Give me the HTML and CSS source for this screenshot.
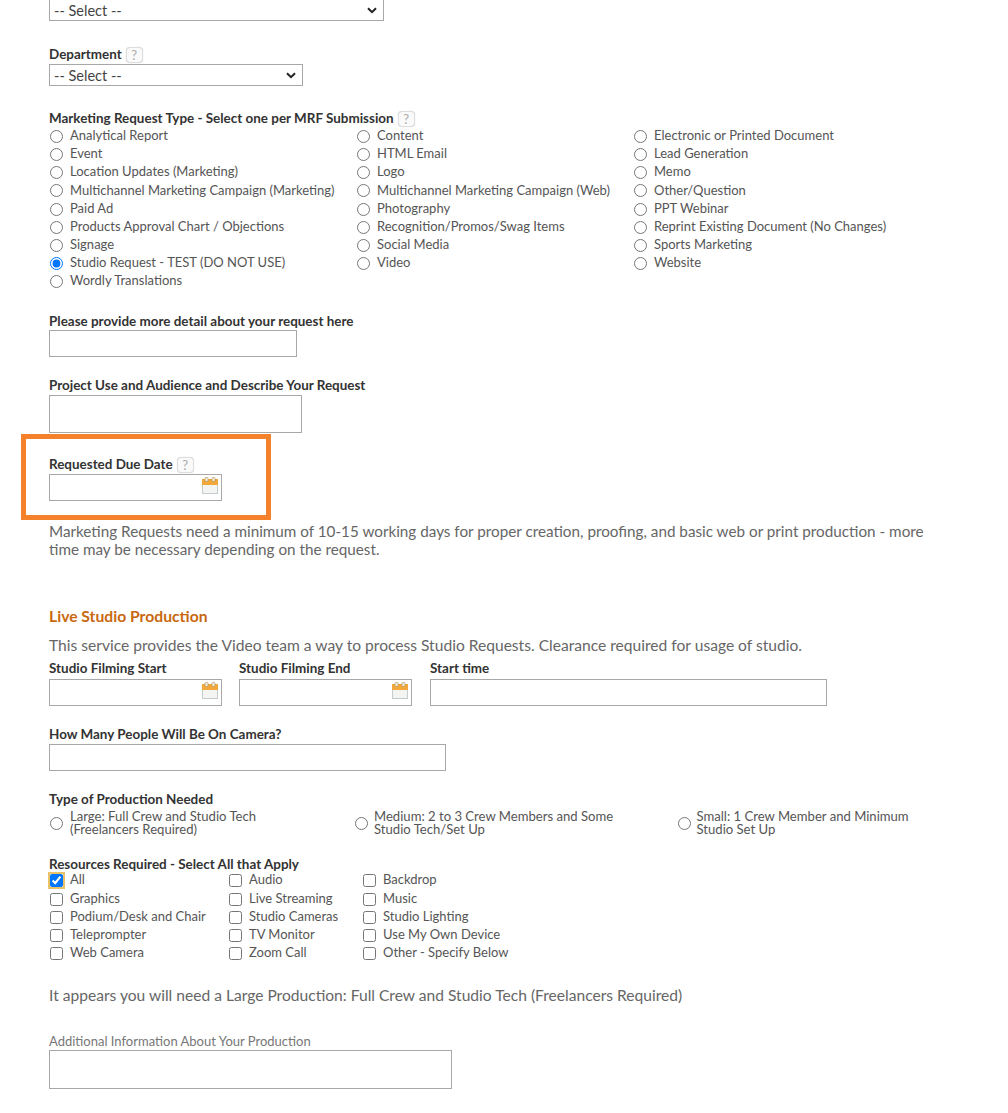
FILE: index.html
```html
<!DOCTYPE html>
<html lang="en">
<head>
<meta charset="utf-8">
<title>Marketing Request Form</title>
<link rel="stylesheet" href="styles.css">
</head>
<body>
<form class="form">
  <select class="select select-wide"><option>-- Select --</option></select>

  <div class="field field-dept">
    <label class="label">Department <span class="help">?</span></label>
    <select class="select select-dept"><option>-- Select --</option></select>
  </div>

  <div class="field field-type">
    <div class="label">Marketing Request Type - Select one per MRF Submission <span class="help">?</span></div>
    <div class="radio-grid">
      <label class="opt"><input type="radio" name="t"><span>Analytical Report</span></label>
      <label class="opt"><input type="radio" name="t"><span>Content</span></label>
      <label class="opt"><input type="radio" name="t"><span>Electronic or Printed Document</span></label>
      <label class="opt"><input type="radio" name="t"><span>Event</span></label>
      <label class="opt"><input type="radio" name="t"><span>HTML Email</span></label>
      <label class="opt"><input type="radio" name="t"><span>Lead Generation</span></label>
      <label class="opt"><input type="radio" name="t"><span>Location Updates (Marketing)</span></label>
      <label class="opt"><input type="radio" name="t"><span>Logo</span></label>
      <label class="opt"><input type="radio" name="t"><span>Memo</span></label>
      <label class="opt"><input type="radio" name="t"><span>Multichannel Marketing Campaign (Marketing)</span></label>
      <label class="opt"><input type="radio" name="t"><span>Multichannel Marketing Campaign (Web)</span></label>
      <label class="opt"><input type="radio" name="t"><span>Other/Question</span></label>
      <label class="opt"><input type="radio" name="t"><span>Paid Ad</span></label>
      <label class="opt"><input type="radio" name="t"><span>Photography</span></label>
      <label class="opt"><input type="radio" name="t"><span>PPT Webinar</span></label>
      <label class="opt"><input type="radio" name="t"><span>Products Approval Chart / Objections</span></label>
      <label class="opt"><input type="radio" name="t"><span>Recognition/Promos/Swag Items</span></label>
      <label class="opt"><input type="radio" name="t"><span>Reprint Existing Document (No Changes)</span></label>
      <label class="opt"><input type="radio" name="t"><span>Signage</span></label>
      <label class="opt"><input type="radio" name="t"><span>Social Media</span></label>
      <label class="opt"><input type="radio" name="t"><span>Sports Marketing</span></label>
      <label class="opt"><input type="radio" name="t" checked><span>Studio Request - TEST (DO NOT USE)</span></label>
      <label class="opt"><input type="radio" name="t"><span>Video</span></label>
      <label class="opt"><input type="radio" name="t"><span>Website</span></label>
      <label class="opt"><input type="radio" name="t"><span>Wordly Translations</span></label>
    </div>
  </div>

  <div class="field field-detail">
    <label class="label">Please provide more detail about your request here</label>
    <input class="text text-detail" type="text">
  </div>

  <div class="field field-use">
    <label class="label">Project Use and Audience and Describe Your Request</label>
    <textarea class="text text-use"></textarea>
  </div>

  <div class="highlight">
    <label class="label">Requested Due Date <span class="help">?</span></label>
    <div class="date">
      <svg class="cal" viewBox="0 0 16 17" aria-hidden="true"><rect x="0.5" y="2.5" width="15" height="14" fill="#f4f4f2" stroke="#c4ccd0"/><rect x="0" y="2" width="16" height="6" fill="#f2a83a"/><rect x="3" y="0.5" width="3" height="4" rx="1" fill="#f7f0df" stroke="#a08a55" stroke-width="0.6"/><rect x="10" y="0.5" width="3" height="4" rx="1" fill="#f7f0df" stroke="#a08a55" stroke-width="0.6"/></svg>
    </div>
  </div>

  <p class="note note-due">Marketing Requests need a minimum of 10-15 working days for proper creation, proofing, and basic web or print production - more time may be necessary depending on the request.</p>

  <h2 class="heading">Live Studio Production</h2>
  <p class="note note-studio">This service provides the Video team a way to process Studio Requests. Clearance required for usage of studio.</p>

  <div class="studio-row">
    <div class="col">
      <label class="label">Studio Filming Start</label>
      <div class="date">
        <svg class="cal" viewBox="0 0 16 17" aria-hidden="true"><rect x="0.5" y="2.5" width="15" height="14" fill="#f4f4f2" stroke="#c4ccd0"/><rect x="0" y="2" width="16" height="6" fill="#f2a83a"/><rect x="3" y="0.5" width="3" height="4" rx="1" fill="#f7f0df" stroke="#a08a55" stroke-width="0.6"/><rect x="10" y="0.5" width="3" height="4" rx="1" fill="#f7f0df" stroke="#a08a55" stroke-width="0.6"/></svg>
      </div>
    </div>
    <div class="col">
      <label class="label">Studio Filming End</label>
      <div class="date">
        <svg class="cal" viewBox="0 0 16 17" aria-hidden="true"><rect x="0.5" y="2.5" width="15" height="14" fill="#f4f4f2" stroke="#c4ccd0"/><rect x="0" y="2" width="16" height="6" fill="#f2a83a"/><rect x="3" y="0.5" width="3" height="4" rx="1" fill="#f7f0df" stroke="#a08a55" stroke-width="0.6"/><rect x="10" y="0.5" width="3" height="4" rx="1" fill="#f7f0df" stroke="#a08a55" stroke-width="0.6"/></svg>
      </div>
    </div>
    <div class="col">
      <label class="label">Start time</label>
      <input class="text text-time" type="text">
    </div>
  </div>

  <div class="field field-people">
    <label class="label">How Many People Will Be On Camera?</label>
    <input class="text text-people" type="text">
  </div>

  <div class="field field-prod">
    <div class="label">Type of Production Needed</div>
    <div class="prod-row">
      <label class="prod"><input type="radio" name="p"><span>Large: Full Crew and Studio Tech (Freelancers Required)</span></label>
      <label class="prod"><input type="radio" name="p"><span>Medium: 2 to 3 Crew Members and Some Studio Tech/Set Up</span></label>
      <label class="prod"><input type="radio" name="p"><span>Small: 1 Crew Member and Minimum Studio Set Up</span></label>
    </div>
  </div>

  <div class="field field-res">
    <div class="label">Resources Required - Select All that Apply</div>
    <div class="check-grid">
      <label class="opt"><input class="focused" type="checkbox" checked><span>All</span></label>
      <label class="opt"><input type="checkbox"><span>Audio</span></label>
      <label class="opt"><input type="checkbox"><span>Backdrop</span></label>
      <label class="opt"><input type="checkbox"><span>Graphics</span></label>
      <label class="opt"><input type="checkbox"><span>Live Streaming</span></label>
      <label class="opt"><input type="checkbox"><span>Music</span></label>
      <label class="opt"><input type="checkbox"><span>Podium/Desk and Chair</span></label>
      <label class="opt"><input type="checkbox"><span>Studio Cameras</span></label>
      <label class="opt"><input type="checkbox"><span>Studio Lighting</span></label>
      <label class="opt"><input type="checkbox"><span>Teleprompter</span></label>
      <label class="opt"><input type="checkbox"><span>TV Monitor</span></label>
      <label class="opt"><input type="checkbox"><span>Use My Own Device</span></label>
      <label class="opt"><input type="checkbox"><span>Web Camera</span></label>
      <label class="opt"><input type="checkbox"><span>Zoom Call</span></label>
      <label class="opt"><input type="checkbox"><span>Other - Specify Below</span></label>
    </div>
  </div>

  <p class="note note-large">It appears you will need a Large Production: Full Crew and Studio Tech (Freelancers Required)</p>

  <div class="field field-info">
    <label class="label label-plain">Additional Information About Your Production</label>
    <textarea class="text text-info"></textarea>
  </div>
</form>
</body>
</html>
```
FILE: styles.css
```css
* { box-sizing: border-box; }
html, body { margin: 0; padding: 0; background: #fff; }
body { overflow: hidden; height: 1113px; font-family: "Lato", "Liberation Sans", sans-serif; color: #555; }
.form { padding: 0 0 0 49px; margin-top: -1px; width: 1008px; }
.label { display: flex; align-items: center; gap: 4px; height: 16px; font-size: 13.45px; line-height: 16px; font-weight: 700; color: #333; white-space: nowrap; }
.label-plain { font-weight: 400; font-size: 13px; color: #777; }
.help { display: block; width: 17px; height: 16px; margin-top: 2px; border: 1px solid #dedede; border-radius: 4px; box-shadow: 0 0 1px #ccc; font-size: 13px; line-height: 14px; font-weight: 400; text-align: center; color: #aaa; background: #fafafa; }
.select { display: block; height: 22px; padding: 0 0 0 4px; border: 1px solid #a8a8a8; border-radius: 0; appearance: none; background: #fff url("data:image/svg+xml,%3Csvg xmlns='http://www.w3.org/2000/svg' width='10' height='7'%3E%3Cpath d='M1 1.2l4 4 4-4' fill='none' stroke='%23222' stroke-width='2'/%3E%3C/svg%3E") no-repeat right 6px center; font-family: inherit; font-size: 14.5px; color: #444; }
.select-wide { width: 335px; }
.select-dept { width: 254px; margin-top: 2px; }
.field-dept { margin-top: 25px; }
.field-type { margin-top: 24px; }
.radio-grid { display: grid; grid-template-columns: 307px 277px 1fr; grid-auto-rows: 18.15px; margin-top: 1px; }
.opt { display: flex; align-items: center; font-size: 13px; line-height: 18px; color: #555; white-space: nowrap; }
.opt input { flex: none; width: 13px; height: 13px; margin: 1px 7px 0 1px; }
.opt span { margin-bottom: 2px; }
.opt input.focused { outline: 2px solid #e8c36a; outline-offset: 0; }
.field-detail { margin-top: 23px; }
.text { display: block; border: 1px solid #a8a8a8; background: #fff; border-radius: 0; margin: 1px 0 0; padding: 0; resize: none; }
.text-detail { width: 248px; height: 27px; }
.field-use { margin-top: 20px; }
.text-use { width: 253px; height: 38px; margin-top: 2px; }
.highlight { width: 250px; height: 86px; margin: 1px 0 0 -28px; padding: 17px 0 0 23px; border: 5px solid #f5822a; }
.date { display: flex; justify-content: flex-end; align-items: flex-start; width: 173px; height: 27px; margin-top: 2px; padding: 2px 3px 0 0; border: 1px solid #a8a8a8; background: #fff; }
.cal { width: 16px; height: 17px; }
.note { margin: 0; font-size: 15.6px; line-height: 18px; color: #666; }
.note-due { width: 900px; margin-top: 2px; font-size: 15.25px; }
.heading { margin: 48px 0 0; font-size: 15.7px; line-height: 20px; font-weight: 700; color: #c8680f; }
.note-studio { margin-top: 10px; }
.studio-row { display: flex; margin-top: 6px; }
.col:nth-child(1) { width: 190px; }
.col:nth-child(2) { width: 191px; }
.col .date, .text-time { margin-top: 3px; }
.text-time { width: 397px; height: 27px; }
.field-people { margin-top: 20px; }
.text-people { width: 397px; height: 27px; margin-top: 2px; }
.field-prod { margin-top: 20px; }
.prod-row { display: grid; grid-template-columns: 305px 322.5px 260px; margin-top: 3px; }
.prod { display: flex; align-items: center; font-size: 13.1px; line-height: 13px; color: #555; }
.prod input { flex: none; width: 13px; height: 13px; margin: 0 7px 0 1px; }
.prod:nth-child(n+2) input { margin-right: 6px; }
.prod:nth-child(1) span { width: 200px; }
.prod:nth-child(2) span { width: 250px; }
.prod:nth-child(3) span { width: 220px; }
.field-res { margin-top: 20px; }
.check-grid { display: grid; grid-template-columns: 179px 134px 1fr; grid-auto-rows: 18.2px; margin-top: -1px; }
.note-large { margin-top: 24px; }
.field-info { margin-top: 29px; }
.text-info { width: 403px; height: 39px; margin-top: 1px; }
```
